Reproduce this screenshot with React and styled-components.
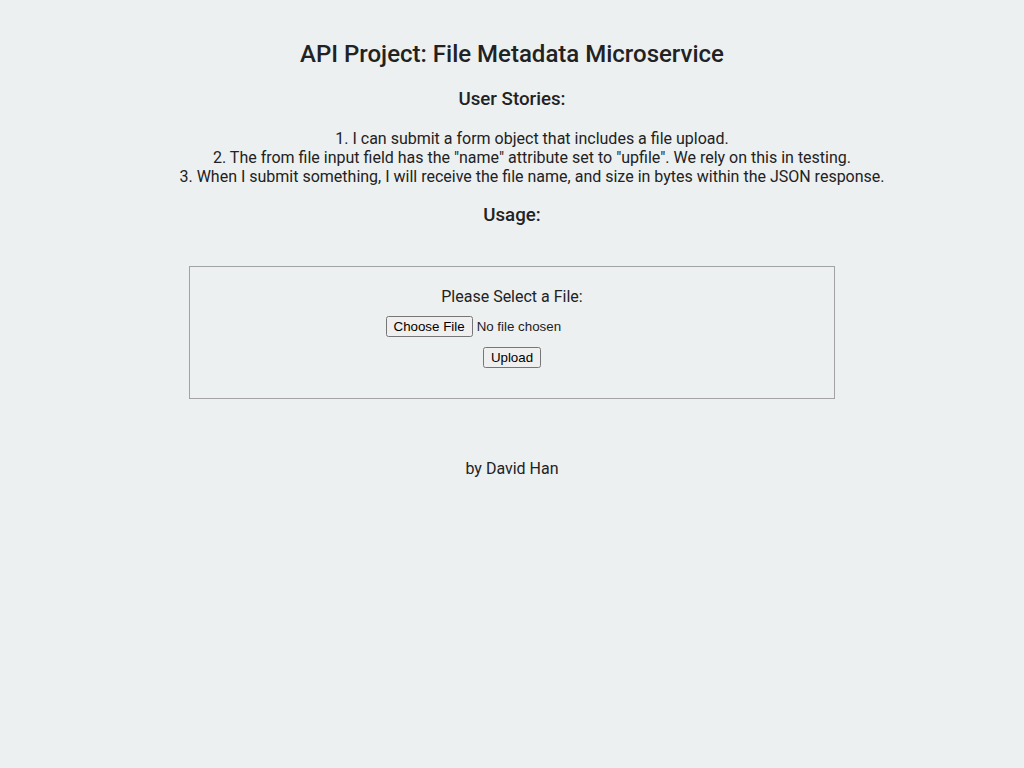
import React from 'react';
import styled, { createGlobalStyle } from 'styled-components';

const GlobalStyle = createGlobalStyle`
  body {
    margin: 0;
    font-family: 'Roboto', 'Liberation Sans', sans-serif;
    font-size: 16px;
    color: #222;
    background-color: #ECF0F1;
    text-align: center;
  }
`;

const Container = styled.div`
  padding-top: 40px;
  min-height: 100vh;
  box-sizing: border-box;
`;

const Title = styled.h2`
  font-size: 24px;
  font-weight: 500;
  line-height: 28px;
  margin: 0 0 20px;
`;

const SubTitle = styled.h3`
  font-size: 18.72px;
  font-weight: 500;
  line-height: 22px;
  margin: ${props => props.$top || 0}px 0 19px;
`;

const Stories = styled.ul`
  list-style: none;
  margin: 0;
  padding-left: 40px;
  line-height: 19px;
`;

const Story = styled.li``;

const UploadForm = styled.form`
  width: 646px;
  box-sizing: border-box;
  margin: 40px auto 0;
  padding: 20px 0 30px;
  border: 1px solid #a3a3a3;
  display: flex;
  flex-direction: column;
  align-items: center;
`;

const Label = styled.p`
  margin: 0 0 10px;
  line-height: 19px;
`;

const FileInput = styled.input`
  margin-bottom: 10px;
  height: 21px;
  font-family: 'Liberation Sans', Arial, sans-serif;
  font-size: 13.33px;
`;

const Submit = styled.input`
  font-family: 'Liberation Sans', Arial, sans-serif;
  font-size: 13.33px;
`;

const Footer = styled.p`
  margin: 60px 0 0;
  line-height: 19px;
`;

export default function App() {
  return (
    <>
      <GlobalStyle />
      <Container>
        <Title>API Project: File Metadata Microservice</Title>
        <SubTitle>User Stories:</SubTitle>
        <Stories>
          <Story>1. I can submit a form object that includes a file upload.</Story>
          <Story>2. The from file input field has the "name" attribute set to "upfile". We rely on this in testing.</Story>
          <Story>3. When I submit something, I will receive the file name, and size in bytes within the JSON response.</Story>
        </Stories>
        <SubTitle $top={18}>Usage:</SubTitle>
        <UploadForm onSubmit={e => e.preventDefault()}>
          <Label>Please Select a File:</Label>
          <FileInput type="file" name="upfile" />
          <Submit type="submit" value="Upload" />
        </UploadForm>
        <Footer>by David Han</Footer>
      </Container>
    </>
  );
}
